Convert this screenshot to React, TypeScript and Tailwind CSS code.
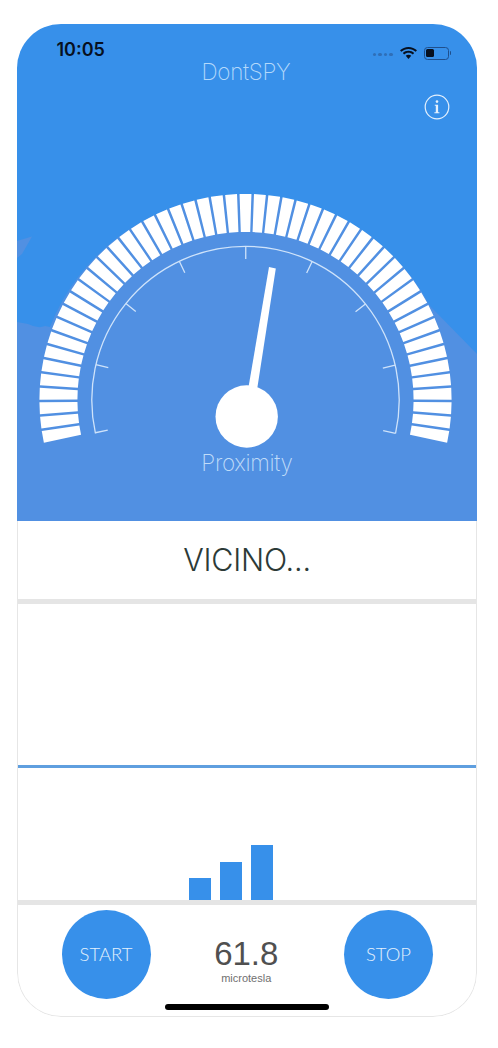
const CX = 245.5;
const CY = 400;

function polar(r: number, deg: number, offset = 0) {
  const a = (deg * Math.PI) / 180;
  // offset moves the point sideways, across the radius
  return [
    CX + r * Math.cos(a) + offset * Math.sin(a),
    CY - r * Math.sin(a) + offset * Math.cos(a),
  ];
}

// 51 white blocks, from just below the left edge round to just below the right edge
const segments = Array.from({ length: 51 }, (_, i) => {
  const mid = 190.3 - i * 4.012;
  const [x1, y1] = polar(206, mid, 5.95);
  const [x2, y2] = polar(206, mid, -5.95);
  const [x3, y3] = polar(168, mid, -4.7);
  const [x4, y4] = polar(168, mid, 4.7);
  return `M${x1} ${y1}L${x2} ${y2}L${x3} ${y3}L${x4} ${y4}Z`;
});

const ticks = Array.from({ length: 9 }, (_, i) => {
  const deg = -12.5 + i * 25.6;
  const [x1, y1] = polar(153.7, deg);
  const [x2, y2] = polar(141, deg);
  return `M${x1} ${y1}L${x2} ${y2}`;
});

function arcPath(r: number, from: number, to: number) {
  const [x1, y1] = polar(r, from);
  const [x2, y2] = polar(r, to);
  return `M${x1} ${y1}A${r} ${r} 0 1 1 ${x2} ${y2}`;
}

function Gauge() {
  return (
    <svg viewBox="17 190 460 258" className="block h-[258px] w-[460px] shrink-0">
      <path d={segments.join("")} fill="#ffffff" />
      <path d={arcPath(153.7, 192.5, -12.5)} fill="none" stroke="#cfe3fa" strokeWidth="1.3" />
      <path d={ticks.join("")} fill="none" stroke="#cfe3fa" strokeWidth="1.3" />
      <polygon points="269,267 275.8,268.5 257,390 248,390" fill="#ffffff" />
      <circle cx="246.7" cy="416.5" r="31.2" fill="#ffffff" />
    </svg>
  );
}

function StatusIcons() {
  return (
    <div className="flex items-center">
      <div className="mr-[6px] flex gap-[2px] pt-[3px]">
        <span className="size-[3.5px] rounded-full bg-[#2f6fb8]" />
        <span className="size-[3.5px] rounded-full bg-[#2f6fb8]" />
        <span className="size-[3.5px] rounded-full bg-[#2f6fb8]" />
        <span className="size-[3.5px] rounded-full bg-[#2f6fb8]" />
      </div>
      <svg viewBox="0 0 18 13" className="h-[14px] w-[19px]">
        <path
          d="M9 2.6c2.6 0 5 1 6.8 2.7l1.2-1.4C14.9 1.9 12.1.7 9 .7S3.1 1.900 1 3.900l1.200 1.400C4 3.600 6.400 2.600 9 2.600z"
          fill="#07101f"
        />
        <path
          d="M9 6.300c1.600 0 3 .6 4.100 1.600l1.300-1.400C13 5.100 11.100 4.400 9 4.400s-4 .7-5.400 2.100l1.300 1.400C6 6.900 7.400 6.300 9 6.300z"
          fill="#07101f"
        />
        <path d="M9 8.200c-1 0-1.900.4-2.600 1L9 12.200l2.600-3C10.900 8.600 10 8.200 9 8.200z" fill="#07101f" />
      </svg>
      <div className="ml-[6px] flex items-center">
        <div className="flex h-[13px] w-[25px] items-center rounded-[3.5px] border border-[#1f4f8c] p-[1.500px]">
          <div className="h-full w-[8px] rounded-[1.500px] bg-[#07101f]" />
        </div>
        <div className="ml-[1px] h-[4px] w-[1.500px] rounded-r-sm bg-[#1f4f8c]" />
      </div>
    </div>
  );
}

function InfoIcon() {
  return (
    <svg viewBox="0 0 26 26" className="size-[26px]">
      <circle cx="13" cy="13" r="11.800" fill="none" stroke="#e4f0fd" strokeWidth="1.200" />
      <circle cx="13" cy="7.600" r="1.300" fill="#e4f0fd" />
      <path d="M10.800 10.800h3.300v7.500h1.300v1h-5v-1h1.400v-6.500h-1z" fill="#e4f0fd" />
    </svg>
  );
}

function RoundButton({ label }: { label: string }) {
  return (
    <button className="flex size-[89px] items-center justify-center rounded-full bg-[#3790ea] font-['Lato',sans-serif] text-[18.500px] font-light text-[#e3f0fd]">
      {label}
    </button>
  );
}

export default function App() {
  return (
    <div className="h-[1048px] w-[498px] overflow-hidden bg-white pt-[24px] pl-[17px]">
      <div className="h-[993px] w-[460px] overflow-hidden rounded-[44px]">
        <header className="relative flex h-[497px] flex-col items-center bg-[#3790ea]">
          <svg viewBox="17 24 460 497" className="absolute inset-0 h-full w-full">
            <path
              d="M17 322L28 324Q38 329 45 326L50 327A209.500 209.500 0 0 1 430 306L477 354V521H17Z"
              fill="#5190e2"
            />
            <path d="M17 241L32 236.500L22 254L17 258Z" fill="#5190e2" />
          </svg>
          <div className="relative flex h-[36px] w-full items-end justify-between pr-[26px] pl-[39.5px]">
            <span className="font-['Inter',sans-serif] text-[18px] leading-[20px] font-semibold text-[#07101f]">10:05</span>
            <StatusIcons />
          </div>
          <h1 className="relative mt-[-2px] pr-[2px] font-['Inter',sans-serif] text-[22.500px] leading-[28px] font-extralight tracking-[-0.3px] text-[#b4d9fb]">
            DontSPY
          </h1>
          <div className="relative mt-[8px] flex h-[26px] w-full justify-end pr-[27px]">
            <InfoIcon />
          </div>
          <div className="relative mt-[70px]">
            <Gauge />
          </div>
          <span className="relative mt-[1px] font-['Inter',sans-serif] text-[22.500px] leading-[28px] font-extralight tracking-[-0.3px] text-[#c0dcf9]">
            Proximity
          </span>
        </header>

        <div className="flex h-[496px] flex-col rounded-b-[44px] border-x-[1.500px] border-b-[1.500px] border-[#e6e6e6] bg-white">
          <div className="flex h-[78px] items-center justify-center font-['Inter',sans-serif] text-[30.500px] font-light tracking-[-0.2px] text-[#2c3a37]">
            VICINO...
          </div>
          <div className="h-[5px] bg-[#e5e5e5]" />
          <div className="relative h-[296px] bg-white">
            <div className="absolute top-[161px] right-0 left-0 h-[2.500px] bg-[#5f9fdf]" />
            <div className="flex h-full items-end gap-[8.5px] pl-[170.5px]">
              <div className="h-[22px] w-[22.5px] bg-[#3790ea]" />
              <div className="h-[38px] w-[22.5px] bg-[#3790ea]" />
              <div className="h-[55px] w-[22.5px] bg-[#3790ea]" />
            </div>
          </div>
          <div className="h-[5px] bg-[#e5e5e5]" />
          <div className="relative flex flex-1 items-start justify-between pt-[5px] pr-[43px] pl-[43.5px]">
            <RoundButton label="START" />
            <div className="flex flex-col items-center pt-[26px] pr-[2px] font-['Liberation_Sans',sans-serif]">
              <span className="text-[33px] leading-[36px] text-[#505050]">61.8</span>
              <span className="text-[11px] leading-[12px] text-[#707070]">microtesla</span>
            </div>
            <RoundButton label="STOP" />
            <div className="absolute bottom-[6px] left-[147px] h-[6px] w-[164px] rounded-full bg-black" />
          </div>
        </div>
      </div>
    </div>
  );
}
